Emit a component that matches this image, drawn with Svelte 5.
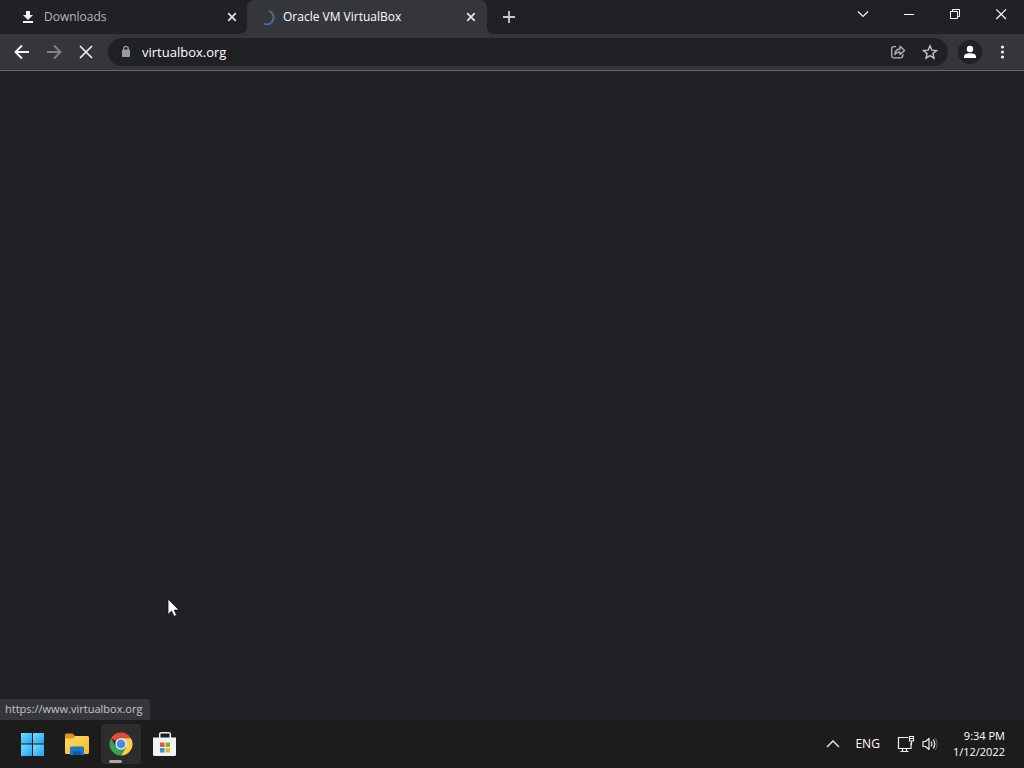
<script>
  let address = $state('virtualbox.org');
</script>

<svelte:head><title>Oracle VM VirtualBox</title></svelte:head>

<div class="desktop">
  <header class="tabstrip">
    <div class="tabs" role="tablist" aria-label="Open tabs">
      <div class="tab first" role="tab" aria-selected="false" tabindex="-1">
        <svg class="fav" viewBox="0 0 16 16" aria-hidden="true">
          <path d="M6 2h4v4h3L8 11 3 6h3zM3 12h10v2H3z" fill="#f1f1f1" />
        </svg>
        <span class="label">Downloads</span>
        <button class="close" aria-label="Close Downloads">
          <svg viewBox="0 0 16 16" width="16" height="16"><path d="M4.2 4.2l7.6 7.6M11.8 4.2l-7.6 7.6" /></svg>
        </button>
      </div>
      <div class="tab active" role="tab" aria-selected="true" tabindex="0">
        <svg class="fav" viewBox="0 0 16 16" aria-hidden="true">
          <path d="M10 1.800A6.800 6.800 0 0 1 5 15" fill="none" stroke="#43719f" stroke-width="1.900" />
        </svg>
        <span class="label">Oracle VM VirtualBox</span>
        <button class="close" aria-label="Close Oracle VM VirtualBox">
          <svg viewBox="0 0 16 16" width="16" height="16"><path d="M4.2 4.2l7.6 7.6M11.8 4.2l-7.6 7.6" /></svg>
        </button>
      </div>
      <button class="newtab" aria-label="New tab">
        <svg viewBox="0 0 16 16" width="16" height="16"><path d="M8 2v12M2 8h12" stroke="#c9cacc" stroke-width="1.800" /></svg>
      </button>
    </div>
    <div class="window-controls">
      <button aria-label="Search tabs">
        <svg viewBox="0 0 16 16" width="16" height="16"><path d="M3 5.500l5 5 5-5" fill="none" stroke="#f4f4f4" stroke-width="1.200" /></svg>
      </button>
      <button aria-label="Minimize">
        <svg viewBox="0 0 16 16" width="16" height="16"><path d="M3 8.5h10" stroke="#fff" /></svg>
      </button>
      <button aria-label="Restore">
        <svg viewBox="0 0 16 16" width="16" height="16"><path d="M3.5 5.5h7v7h-7zM5.5 5V3.500h7v7H11" fill="none" stroke="#fff" /></svg>
      </button>
      <button aria-label="Close window">
        <svg viewBox="0 0 16 16" width="16" height="16"><path d="M3.300 3.300l9.700 9.700M13 3.300L3.300 13" stroke="#fff" stroke-width="1.2" /></svg>
      </button>
    </div>
  </header>

  <nav class="toolbar" aria-label="Browser toolbar">
    <div class="navgroup">
      <button aria-label="Back">
        <svg viewBox="0 0 16 16" width="16" height="16"><path d="M15 8H2M8 1.500L1.500 8 8 14.500" fill="none" stroke="#f4f4f4" stroke-width="1.9" /></svg>
      </button>
      <button aria-label="Forward" disabled>
        <svg viewBox="0 0 16 16" width="16" height="16"><path d="M1 8h13M8 1.500L14.500 8 8 14.500" fill="none" stroke="#818286" stroke-width="1.9" /></svg>
      </button>
      <button aria-label="Stop loading">
        <svg viewBox="0 0 16 16" width="16" height="16"><path d="M2 2l12 12M14 2L2 14" stroke="#f4f4f4" stroke-width="1.600" /></svg>
      </button>
    </div>
    <div class="omnibox">
      <button class="lock" aria-label="View site information">
        <svg viewBox="0 0 16 16" width="16" height="16"><path d="M4.500 6h7v6.500h-7z" fill="#9b9c9f" stroke="#9b9c9f" stroke-linejoin="round" /><path d="M5.800 6V4.500a2.200 2.200 0 0 1 4.400 0V6" fill="none" stroke="#9b9c9f" stroke-width="1.300" /></svg>
      </button>
      <input type="text" aria-label="Address" bind:value={address} />
      <button aria-label="Share this page">
        <svg viewBox="0 0 16 16" width="16" height="16" fill="none" stroke="#b4b5b8" stroke-width="1.300" stroke-linejoin="round"><path d="M6 2.700H3.500a1.800 1.800 0 0 0-1.800 1.800v7.500a1.800 1.800 0 0 0 1.800 1.800h7.500a1.800 1.800 0 0 0 1.800-1.800V10" /><path d="M4.800 10.500C5 7 6.800 5.200 10 5V2.300l4.600 4.200L10 10.500V8C7.500 8 6 8.800 4.800 10.500z" /></svg>
      </button>
      <button aria-label="Bookmark this tab">
        <svg viewBox="0 0 16 16" width="16" height="16"><path d="M8 1.800l1.800 4.300 4.700.4-3.600 3.100 1.100 4.600L8 11.700l-4 2.500 1.100-4.600-3.600-3.100 4.700-.4z" fill="none" stroke="#c3c4c6" stroke-width="1.400" /></svg>
      </button>
    </div>
    <div class="navgroup">
      <button class="profile" aria-label="Profile">
        <svg viewBox="0 0 16 16" width="16" height="16" fill="#fff"><circle cx="8" cy="5" r="3.200" /><path d="M2 14v-1.500C2 10.300 4.700 9.300 8 9.300s6 1 6 3.200V14z" /></svg>
      </button>
      <button aria-label="Menu">
        <svg viewBox="0 0 16 16" width="16" height="16" fill="#f1f1f1"><circle cx="8.500" cy="3" r="1.600" /><circle cx="8.500" cy="8" r="1.600" /><circle cx="8.500" cy="13" r="1.600" /></svg>
      </button>
    </div>
  </nav>

  <main class="page">
    <div class="status">https://www.virtualbox.org</div>
  </main>

  <footer class="taskbar">
    <div class="apps">
      <button aria-label="Start">
        <svg viewBox="0 0 24 24" width="24" height="24">
          <defs><linearGradient id="win" x1="0" y1="0" x2="1" y2="1"><stop offset="0" stop-color="#7bdcff" /><stop offset="1" stop-color="#1ea1f2" /></linearGradient></defs>
          <g fill="url(#win)"><path d="M0 1h11v10.500H0z" /><path d="M12 1h11v10.500H12z" /><path d="M0 12.500h11V24H0z" /><path d="M12 12.500h11V24H12z" /></g>
        </svg>
      </button>
      <button aria-label="File Explorer">
        <svg viewBox="0 0 24 24" width="24" height="24">
          <defs><linearGradient id="folder" x1="0" y1="0" x2="1" y2="1"><stop offset="0" stop-color="#ffdb69" /><stop offset="1" stop-color="#f3b926" /></linearGradient></defs>
          <path d="M0 3a1.500 1.500 0 0 1 1.500-1.500h6L10 4h12.500A1.500 1.500 0 0 1 24 5.500V9H0z" fill="#d99a18" />
          <path d="M0 6.500h8L10.500 4h12A1.500 1.500 0 0 1 24 5.500v15a1.500 1.500 0 0 1-1.500 1.500h-21A1.500 1.500 0 0 1 0 20.500z" fill="url(#folder)" />
          <path d="M5 23v-7a1.500 1.500 0 0 1 1.500-1.500h11A1.500 1.500 0 0 1 19 16v7z" fill="#1679c5" /><path d="M8 19.500h8V23H8z" fill="#0e5798" />
        </svg>
      </button>
      <button class="running" aria-label="Google Chrome">
        <svg viewBox="0 0 24 24" width="24" height="24">
          <path d="M12 12L2.040 6.250A11.500 11.500 0 0 1 21.960 6.250L12 6.250z" fill="#df4b3e" />
          <path d="M12 6.250h9.960A11.500 11.500 0 0 1 12 23.500l4.980-8.620z" fill="#fbcf45" />
          <path d="M2.040 6.250L7.020 14.880 12 17.750l4.980-2.870L12 23.500A11.500 11.500 0 0 1 2.040 6.250z" fill="#35a352" />
          <circle cx="12" cy="12" r="5.700" fill="#f4f6f7" /><circle cx="12" cy="12" r="4.400" fill="#4b86e8" />
        </svg>
      </button>
      <button aria-label="Microsoft Store">
        <svg viewBox="0 0 24 24" width="24" height="24">
          <path d="M6.700 6V2.200A1.500 1.500 0 0 1 8.200.8h7.600a1.500 1.500 0 0 1 1.500 1.400V6" fill="none" stroke="#ececec" stroke-width="1.600" />
          <path d="M0 5.500h23v17A1.500 1.500 0 0 1 21.500 24h-20A1.500 1.500 0 0 1 0 22.500z" fill="#f4f3f3" />
          <path d="M7 10.500h4.500V15H7z" fill="#e9552d" /><path d="M12.500 10.500H17V15h-4.500z" fill="#78b72b" /><path d="M7 16h4.500v4.500H7z" fill="#239fd9" /><path d="M12.500 16H17v4.500h-4.500z" fill="#f5b51e" />
        </svg>
      </button>
    </div>
    <div class="tray">
      <button aria-label="Show hidden icons">
        <svg viewBox="0 0 16 16" width="16" height="16"><path d="M2 11l6-6 6 6" fill="none" stroke="#f1f1f1" stroke-width="1.300" /></svg>
      </button>
      <button class="lang">ENG</button>
      <button class="network" aria-label="Network and volume">
        <svg viewBox="0 0 18 18" width="18" height="18" fill="none" stroke="#f1f1f1" stroke-width="1.200"><path d="M11 2.500H1.500v11H14V8M5.500 13.500v3M9.500 13.500v3M3.500 16.500h8" /><path d="M12.500 1.500h4V6h-4zM12.500 3.500h4M14.500 6v4" /></svg>
        <svg viewBox="0 0 18 18" width="18" height="18" fill="none" stroke="#f1f1f1" stroke-width="1.200" stroke-linejoin="round"><path d="M2 6.500h2.500L8 3.500v11l-3.500-3H2z" /><path d="M10.200 6.500q1.600 2.500 0 5M12.200 4.500q3 4.500 0 9" /><path d="M14.200 3q4 6 0 12" stroke="#5a5a5a" /></svg>
      </button>
      <button class="clock"><time datetime="2022-01-12T21:34">9:34 PM<br />1/12/2022</time></button>
    </div>
  </footer>

  <svg class="pointer" viewBox="0 0 14 20" width="14" height="20" aria-hidden="true"><path d="M1 1v15.500l3.600-3.400 2.300 5.300 2.700-1.200-2.300-5.100h4.800z" fill="#fff" stroke="#111" stroke-width=".8" /></svg>
</div>

<style>
  :global(body) { margin: 0; background: #202124; }
  .desktop {
    position: relative;
    display: flex;
    flex-direction: column;
    min-height: 100vh;
    background: #202124;
    color: #f1f1f1;
    font: 12px/16px 'Open Sans', 'Noto Sans', sans-serif;
  }
  button {
    display: flex;
    align-items: center;
    justify-content: center;
    padding: 0;
    border: 0;
    background: none;
    color: inherit;
    font: inherit;
  }
  svg { display: block; flex: none; }

  .tabstrip { display: flex; justify-content: space-between; height: 34px; }
  .tabs { display: flex; flex: 1; min-width: 0; }
  .tab {
    position: relative;
    display: flex;
    align-items: center;
    flex: 0 1 240px;
    min-width: 0;
    box-sizing: border-box;
    padding: 0 8px 0 12px;
    color: #b4b6ba;
  }
  .tab.first { flex-basis: 247px; padding-left: 20px; padding-right: 7px; }
  .tab.active { background: #35363a; border-radius: 8px 8px 0 0; color: #fff; }
  .tab.active::before,
  .tab.active::after {
    content: '';
    position: absolute;
    bottom: 0;
    width: 8px;
    height: 8px;
  }
  .tab.active::before { right: 100%; background: radial-gradient(circle at 0 0, transparent 8px, #35363a 8px); }
  .tab.active::after { left: 100%; background: radial-gradient(circle at 100% 0, transparent 8px, #35363a 8px); }
  .fav { width: 16px; height: 16px; }
  .label { flex: 1; margin-left: 8px; white-space: nowrap; overflow: hidden; }
  .close { width: 16px; height: 16px; }
  .close path { stroke: #e4e5e6; stroke-width: 1.7; }
  .newtab { width: 28px; margin-left: 8px; }
  .window-controls { display: flex; }
  .window-controls button { width: 46px; height: 28px; }

  .toolbar {
    display: flex;
    align-items: center;
    gap: 8px;
    padding: 4px 8px;
    background: #35363a;
    border-bottom: 1px solid #66686b;
  }
  .navgroup { display: flex; gap: 4px; }
  .navgroup button, .omnibox button { width: 28px; height: 28px; }
  .omnibox {
    display: flex;
    align-items: center;
    flex: 1;
    gap: 4px;
    min-width: 0;
    padding: 0 4px;
    background: #202124;
    border-radius: 14px;
  }
  .omnibox .lock { margin-right: -2px; }
  .omnibox input {
    flex: 1;
    min-width: 0;
    height: 28px;
    padding: 0;
    border: 0;
    outline: 0;
    background: none;
    color: #fff;
    font: 13px/20px 'Open Sans', 'Noto Sans', sans-serif;
  }
  .navgroup .profile { width: 24px; height: 24px; margin: 2px; background: #202124; border-radius: 50%; }

  .page { display: flex; flex: 1; align-items: flex-end; }
  .status {
    padding: 2px 8px 3px 5px;
    background: #35363a;
    border-radius: 0 4px 0 0;
    color: #c4c6c9;
    font-size: 11px;
  }

  .taskbar {
    display: flex;
    align-items: center;
    justify-content: space-between;
    height: 48px;
    padding: 0 19px 0 13px;
    background: #1c1c1c;
  }
  .apps { display: flex; gap: 4px; }
  .apps button { position: relative; width: 40px; height: 40px; border-radius: 4px; }
  .apps .running { background: #2d2d2d; }
  .running::after {
    content: '';
    position: absolute;
    left: 8px;
    bottom: 1px;
    width: 13px;
    height: 3px;
    border-radius: 2px;
    background: #a8a8a8;
  }
  .tray { display: flex; align-items: center; color: #fff; font-size: 11px; }
  .tray .lang { margin: 0 17px 0 14px; font-size: 12px; }
  .network { gap: 6px; }
  .clock { margin-left: 14px; text-align: right; }
  .pointer { position: absolute; left: 167px; top: 598px; }
</style>
